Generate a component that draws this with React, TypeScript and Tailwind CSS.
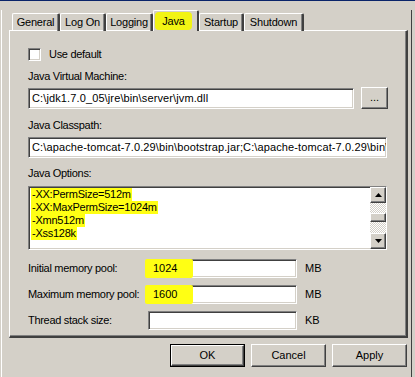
import React from "react";

const sunken =
  "border border-t-[#808080] border-l-[#808080] border-r-white border-b-white shadow-[inset_1px_1px_0_#404040,inset_-1px_-1px_0_#d4d0c8] bg-white";
const raised =
  "border border-t-white border-l-white border-r-[#404040] border-b-[#404040] shadow-[inset_-1px_-1px_0_#808080] bg-[#d4d0c8]";

const tabs = [
  { name: "General", w: "w-[48px]" },
  { name: "Log On", w: "w-[46px]" },
  { name: "Logging", w: "w-[47px]" },
  { name: "Java", w: "w-[46px]", active: true },
  { name: "Startup", w: "w-[45px]" },
  { name: "Shutdown", w: "w-[60px]" },
];

const javaOptions = [
  "-XX:PermSize=512m",
  "-XX:MaxPermSize=1024m",
  "-Xmn512m",
  "-Xss128k",
];

const memoryRows = [
  { label: "Initial memory pool:", value: "1024", unit: "MB" },
  { label: "Maximum memory pool:", value: "1600", unit: "MB" },
  { label: "Thread stack size:", value: "", unit: "KB" },
];

function Arrow({ up }: { up?: boolean }) {
  return (
    <svg width="7" height="4" viewBox="0 0 7 4">
      {up ? <path d="M3.5 0 L7 4 L0 4 Z" fill="#000" /> : <path d="M0 0 L7 0 L3.5 4 Z" fill="#000" />}
    </svg>
  );
}

export default function App() {
  return (
    <div className="w-[415px] h-[377px] bg-[#d4d0c8] border-t border-[#0a246a] overflow-hidden font-['Liberation_Sans',Arial,sans-serif] text-[11px] text-black">
      <div className="ml-[1px] w-[411px] h-[375px] border-l border-r border-b border-l-white border-r-[#404040] border-b-[#404040]">
        {/* Tabs */}
        <div className="flex items-end h-[21px] mt-[9px] ml-[10px] -mb-[1px] relative z-10 tracking-[-0.2px]">
          {tabs.map((t) =>
            t.active ? (
              <div
                key={t.name}
                className={`${t.w} h-[21px] bg-[#d4d0c8] border-l border-t border-r-2 border-l-white border-t-white border-r-[#404040] rounded-t-[2px] flex items-start pt-[1px]`}
              >
                <div className="ml-[1px] w-[37px] h-[18px] bg-[#f2f414] rounded-[4px] flex items-center justify-center">
                  Java
                </div>
              </div>
            ) : (
              <div
                key={t.name}
                className={`${t.w} h-[18px] border-l border-t border-r-2 border-l-white border-t-white border-r-[#404040] shadow-[inset_-1px_0_0_#808080] rounded-t-[2px] flex items-center justify-center pb-[1px]`}
              >
                {t.name}
              </div>
            )
          )}
        </div>

        {/* Panel */}
        <div className="ml-[7px] w-[399px] h-[308px] border-l border-t border-r-2 border-b-2 border-l-white border-t-white border-r-[#404040] border-b-[#404040] shadow-[inset_-1px_-1px_0_#808080] pl-[18px] flex flex-col">
          <div className="mt-[17px] flex items-center h-[13px]">
            <div className={`w-[13px] h-[13px] ${sunken}`} />
            <span className="ml-[8px] tracking-[-0.3px]">Use default</span>
          </div>

          <div className="mt-[9px] h-[13px] leading-[13px] tracking-[-0.3px]">Java Virtual Machine:</div>
          <div className="mt-[4px] flex items-center h-[22px]">
            <div className={`w-[326px] h-[21px] ${sunken} flex items-center pl-[3px] whitespace-nowrap overflow-hidden tracking-[0.12px]`}>
              C:\jdk1.7.0_05\jre\bin\server\jvm.dll
            </div>
            <div className={`ml-[7px] w-[27px] h-[22px] ${raised} flex items-center justify-center pb-[2px]`}>...</div>
          </div>

          <div className="mt-[10px] h-[13px] leading-[13px] tracking-[-0.3px]">Java Classpath:</div>
          <div className={`mt-[5px] w-[359px] h-[21px] ${sunken} flex items-center pl-[3px] whitespace-nowrap overflow-hidden tracking-[0.12px]`}>
            C:\apache-tomcat-7.0.29\bin\bootstrap.jar;C:\
            <span className="inline-block w-[1px] h-[13px] bg-black" />
            apache-tomcat-7.0.29\bin\bootstrap.jar
          </div>

          <div className="mt-[9px] h-[13px] leading-[13px] tracking-[-0.3px]">Java Options:</div>
          <div className={`mt-[6px] w-[359px] h-[64px] ${sunken} flex`}>
            <div className="flex-1 pl-[2px] pt-[1px] flex flex-col tracking-[-0.25px]">
              {javaOptions.map((o) => (
                <div key={o} className="w-fit h-[13px] leading-[13px] bg-[#ffff14] px-[1px]">
                  {o}
                </div>
              ))}
            </div>
            <div className="w-[16px] flex flex-col">
              <div className={`h-[16px] ${raised} flex items-center justify-center`}>
                <Arrow up />
              </div>
              <div className="flex-1 bg-[image:repeating-conic-gradient(#ffffff_0_25%,#d4d0c8_0_50%)] bg-[length:2px_2px] flex flex-col">
                <div className={`mt-[10px] h-[9px] ${raised}`} />
              </div>
              <div className={`h-[16px] ${raised} flex items-center justify-center`}>
                <Arrow />
              </div>
            </div>
          </div>

          <div className="mt-[9px] flex flex-col gap-[7px]">
            {memoryRows.map((r) => (
              <div key={r.label} className="flex items-center h-[19px]">
                <div className="w-[120px] tracking-[-0.3px]">{r.label}</div>
                <div className={`relative w-[149px] h-[19px] ${sunken}`}>
                  {r.value && (
                    <div className="absolute -left-[4px] -top-[1px] -bottom-[1px] w-[48px] bg-[#ffff14] rounded-[2px]" />
                  )}
                  <span className="relative ml-[4px] leading-[17px]">{r.value}</span>
                </div>
                <div className="ml-[8px]">{r.unit}</div>
              </div>
            ))}
          </div>
        </div>

        {/* Buttons */}
        <div className="mt-[6px] ml-[168px] flex gap-[6px]">
          <div className="w-[75px] h-[23px] border border-black">
            <div className={`w-full h-full ${raised} flex items-center justify-center`}>OK</div>
          </div>
          <div className={`w-[75px] h-[23px] ${raised} flex items-center justify-center`}>Cancel</div>
          <div className={`w-[75px] h-[23px] ${raised} flex items-center justify-center`}>Apply</div>
        </div>
      </div>
    </div>
  );
}
